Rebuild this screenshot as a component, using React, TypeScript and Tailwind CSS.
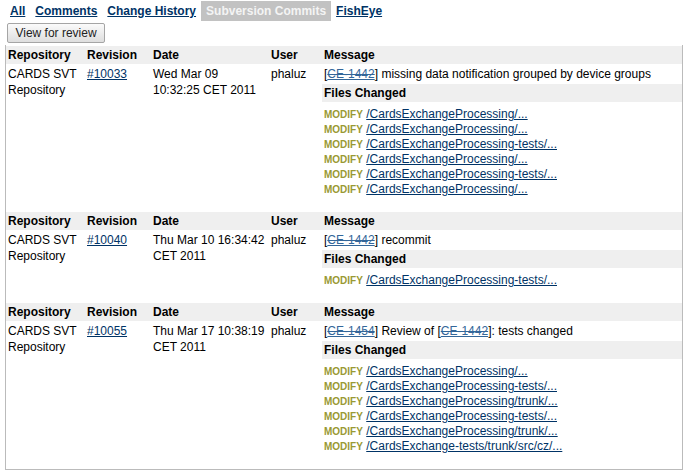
import React from "react";

type Commit = {
  rev: string;
  date: string;
  msg: React.ReactNode;
  files: string[];
};

const Issue = ({ id }: { id: string }) => (
  <a href="#" className="text-[#336699] [text-decoration-line:underline_line-through]">
    {id}
  </a>
);

const commits: Commit[] = [
  {
    rev: "#10033",
    date: "Wed Mar 09 10:32:25 CET 2011",
    msg: (
      <>
        [<Issue id="CE-1442" />] missing data notification grouped by device groups
      </>
    ),
    files: [
      "/CardsExchangeProcessing/...",
      "/CardsExchangeProcessing/...",
      "/CardsExchangeProcessing-tests/...",
      "/CardsExchangeProcessing/...",
      "/CardsExchangeProcessing-tests/...",
      "/CardsExchangeProcessing/...",
    ],
  },
  {
    rev: "#10040",
    date: "Thu Mar 10 16:34:42 CET 2011",
    msg: (
      <>
        [<Issue id="CE-1442" />] recommit
      </>
    ),
    files: ["/CardsExchangeProcessing-tests/..."],
  },
  {
    rev: "#10055",
    date: "Thu Mar 17 10:38:19 CET 2011",
    msg: (
      <>
        [<Issue id="CE-1454" />] Review of [<Issue id="CE-1442" />]: tests changed
      </>
    ),
    files: [
      "/CardsExchangeProcessing/...",
      "/CardsExchangeProcessing-tests/...",
      "/CardsExchangeProcessing/trunk/...",
      "/CardsExchangeProcessing-tests/...",
      "/CardsExchangeProcessing/trunk/...",
      "/CardsExchange-tests/trunk/src/cz/...",
    ],
  },
];

const th = "bg-[#efefef] h-[18px] leading-[18px] pl-[2px] pr-[2px] text-left font-bold text-[12px] align-top";
const td = "pl-[2px] pr-[2px] pt-[2px] leading-[16px] align-top";

function CommitTable({ c }: { c: Commit }) {
  return (
    <table className="w-full table-fixed border-collapse">
      <colgroup>
        <col className="w-[79px]" />
        <col className="w-[66px]" />
        <col className="w-[118px]" />
        <col className="w-[53px]" />
        <col />
      </colgroup>
      <tbody>
        <tr>
          <th className={th}>Repository</th>
          <th className={th}>Revision</th>
          <th className={th}>Date</th>
          <th className={th}>User</th>
          <th className={th}>Message</th>
        </tr>
        <tr>
          <td className={td}>CARDS SVT Repository</td>
          <td className={td}>
            <a href="#" className="text-[#003366] underline">
              {c.rev}
            </a>
          </td>
          <td className={td}>{c.date}</td>
          <td className={td}>phaluz</td>
          <td className="p-0 align-top">
            <div className="h-[20px] py-[2px] pl-[2px] leading-[16px] whitespace-nowrap">{c.msg}</div>
            <div className="h-[18px] bg-[#efefef] pl-[2px] leading-[18px] font-bold">Files Changed</div>
            <div className="pt-[5px] pb-[15px] pl-[2px]">
              {c.files.map((f, i) => (
                <div key={i} className="h-[15px] leading-[15px] whitespace-nowrap">
                  <span className="text-[10px] font-bold text-[#999933]">MODIFY</span>{" "}
                  <a href="#" className="text-[#003366] underline">
                    {f}
                  </a>
                </div>
              ))}
            </div>
          </td>
        </tr>
      </tbody>
    </table>
  );
}

export default function App() {
  const tabs = ["All", "Comments", "Change History", "Subversion Commits", "FishEye"];
  return (
    <div
      className="w-[688px] h-[473px] bg-white text-black text-[12px] pt-[1px] overflow-hidden"
      style={{ fontFamily: '"Liberation Sans", Arial, sans-serif' }}
    >
      <div className="flex ml-[5px] h-[20px]">
        {tabs.map((t) =>
          t === "Subversion Commits" ? (
            <span key={t} className="px-[5px] h-[20px] leading-[20px] font-bold bg-[#c2c2c2] text-[#f4f4f4]">
              {t}
            </span>
          ) : (
            <a key={t} href="#" className="px-[5px] h-[20px] leading-[20px] font-bold text-[#003366] underline">
              {t}
            </a>
          )
        )}
      </div>
      <div className="mt-[2px] ml-[7px]">
        <button className="h-[20px] w-[98px] border border-[#a5a5a5] rounded-[2px] bg-gradient-to-b from-[#fbfbfb] to-[#dedede] text-[12px] text-[#222] leading-[18px]">
          View for review
        </button>
      </div>
      <div className="mt-[2px] ml-[5px] w-[678px] border-l border-r border-b border-[#bbbbbb] pt-[1px]">
        {commits.map((c, i) => (
          <CommitTable key={i} c={c} />
        ))}
      </div>
    </div>
  );
}
